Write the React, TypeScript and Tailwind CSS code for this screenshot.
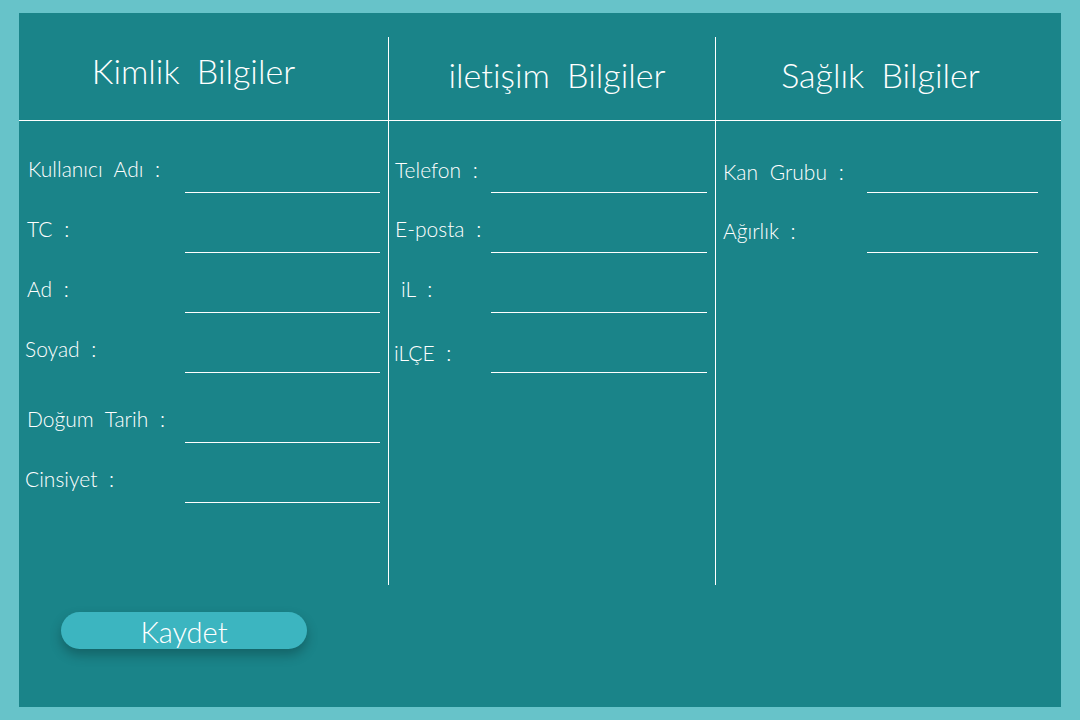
import React from "react";

type Field = {
  label: string;
  rowH: number;
  labelPad?: string;
  labelMb?: string;
};

const kimlik: Field[] = [
  { label: "Kullanıcı Adı :", rowH: 72, labelPad: "pl-[9px]" },
  { label: "TC :", rowH: 60 },
  { label: "Ad :", rowH: 60 },
  { label: "Soyad :", rowH: 60, labelPad: "pl-[6px]" },
  { label: "Doğum Tarih :", rowH: 70 },
  { label: "Cinsiyet :", rowH: 60, labelPad: "pl-[6px]" },
];

const iletisim: Field[] = [
  { label: "Telefon :", rowH: 72, labelMb: "mb-[9px]" },
  { label: "E-posta :", rowH: 60 },
  { label: "iL :", rowH: 60, labelPad: "pl-[12px]" },
  { label: "iLÇE :", rowH: 60, labelPad: "pl-[5px]", labelMb: "mb-[6px]" },
];

const saglik: Field[] = [
  { label: "Kan Grubu :", rowH: 72, labelMb: "mb-[7px]" },
  { label: "Ağırlık :", rowH: 60, labelMb: "mb-[8px]" },
];

const FieldRow = ({
  field,
  labelW,
  lineW,
  basePad,
}: {
  field: Field;
  labelW: string;
  lineW: string;
  basePad: string;
}) => (
  <div className="flex items-end" style={{ height: field.rowH }}>
    <div
      className={`${labelW} ${field.labelPad ?? basePad} ${field.labelMb ?? "mb-[10px]"} text-[21px] leading-[28px] font-light [word-spacing:6px] [font-variant-ligatures:none] whitespace-nowrap`}
    >
      {field.label}
    </div>
    <div className={`${lineW} h-px bg-white`} />
  </div>
);

const App = () => {
  return (
    <div
      className="w-[1080px] h-[720px] bg-[#67c3c9] pt-[13px] pb-[13px] px-[19px] text-white"
      style={{ fontFamily: '"Lato", "Open Sans", sans-serif' }}
    >
      <div className="h-full bg-[#1a8489] flex flex-col pt-[24px]">
        <div className="flex h-[548px]">
          {/* Kimlik */}
          <div className="w-[369px] flex flex-col">
            <div className="h-[84px] border-b border-white flex items-start justify-center pr-[20px] pt-[8px]">
              <h2 className="text-[34px] font-light [word-spacing:8px] [font-variant-ligatures:none]">Kimlik Bilgiler</h2>
            </div>
            <div className="flex flex-col">
              {kimlik.map((f) => (
                <FieldRow
                  key={f.label}
                  field={f}
                  labelW="w-[166px]"
                  lineW="w-[195px]"
                  basePad="pl-[8px]"
                />
              ))}
            </div>
          </div>
          {/* İletişim */}
          <div className="w-[327px] flex flex-col border-l border-white">
            <div className="h-[84px] border-b border-white flex items-center justify-center pl-[10px] pb-[8px]">
              <h2 className="text-[34px] font-light [word-spacing:8px] [font-variant-ligatures:none]">iletişim Bilgiler</h2>
            </div>
            <div className="flex flex-col">
              {iletisim.map((f) => (
                <FieldRow
                  key={f.label}
                  field={f}
                  labelW="w-[102px]"
                  lineW="w-[216px]"
                  basePad="pl-[6px]"
                />
              ))}
            </div>
          </div>
          {/* Sağlık */}
          <div className="flex-1 flex flex-col border-l border-white">
            <div className="h-[84px] border-b border-white flex items-center justify-center pr-[16px] pb-[8px]">
              <h2 className="text-[34px] font-light [word-spacing:8px] [font-variant-ligatures:none]">Sağlık Bilgiler</h2>
            </div>
            <div className="flex flex-col">
              {saglik.map((f) => (
                <FieldRow
                  key={f.label}
                  field={f}
                  labelW="w-[151px]"
                  lineW="w-[171px]"
                  basePad="pl-[7px]"
                />
              ))}
            </div>
          </div>
        </div>
        <div className="pl-[42px] pt-[27px]">
          <button className="w-[246px] h-[37px] rounded-full bg-[#3cb5c0] text-[29px] font-light leading-none pt-[2px] shadow-[0_6px_12px_rgba(0,0,0,0.25)]">
            Kaydet
          </button>
        </div>
      </div>
    </div>
  );
};

export default App;
